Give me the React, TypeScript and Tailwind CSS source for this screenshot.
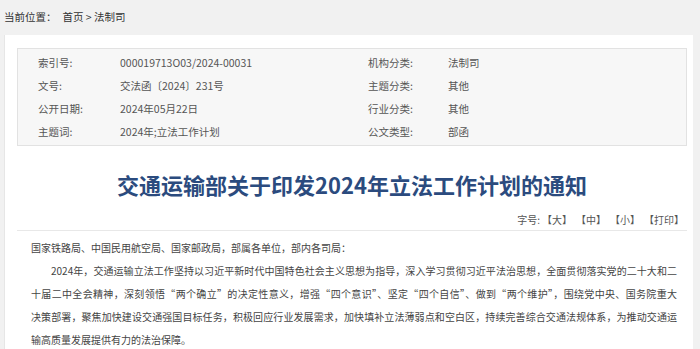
const font = "font-['Microsoft_YaHei','Noto_Sans_CJK_SC',sans-serif]";

const meta = [
  ["索引号:", "000019713O03/2024-00031", "机构分类:", "法制司"],
  ["文号:", "交法函〔2024〕231号", "主题分类:", "其他"],
  ["公开日期:", "2024年05月22日", "行业分类:", "其他"],
  ["主题词:", "2024年;立法工作计划", "公文类型:", "部函"],
];

const lines = [
  "2024年，交通运输立法工作坚持以习近平新时代中国特色社会主义思想为指导，深入学习贯彻习近平法治思想，全面贯彻落实党的二十大和二",
  "十届二中全会精神，深刻领悟“两个确立”的决定性意义，增强“四个意识”、坚定“四个自信”、做到“两个维护”，围绕党中央、国务院重大",
  "决策部署，聚焦加快建设交通强国目标任务，积极回应行业发展需求，加快填补立法薄弱点和空白区，持续完善综合交通法规体系，为推动交通运",
];

export default function App() {
  return (
    <div className={`h-[349px] w-[700px] overflow-hidden bg-[#f1f1f1] text-[10px] text-[#333] ${font}`}>
      <div className="flex h-[35px] items-center pl-[4px] pb-[2px] text-[10.5px]">
        当前位置：<span className="ml-[6px]">首页 &gt; 法制司</span>
      </div>
      <div className="ml-[4px] w-[689px] border-l border-[#e6e6e6] bg-white pl-3 pr-[6px] pt-[13px] pb-4">
        <div className="grid grid-cols-2 border border-[#e2e2e2] bg-[#f7f7f7] py-[2px] pl-5 text-[10.5px] text-[#555]">
          {meta.map((r) => (
            <>
              <div key={r[0]} className="flex h-[23px] items-center">
                <span className="w-[82px]">{r[0]}</span>
                <span>{r[1]}</span>
              </div>
              <div key={r[2]} className="flex h-[23px] items-center pl-[6px]">
                <span className="w-[80px]">{r[2]}</span>
                <span>{r[3]}</span>
              </div>
            </>
          ))}
        </div>
        <h1 className="mt-[23px] text-center text-[22px] font-bold leading-[30px] text-[#2b4b7e]">
          交通运输部关于印发2024年立法工作计划的通知
        </h1>
        <div className="mt-[13px] flex justify-end border-b border-[#e8e8e8] pb-[3px] pr-[3px] text-[#555]">
          <span>字号:</span>
          <span className="ml-[2px]">【大】</span>
          <span className="ml-[4px]">【中】</span>
          <span className="ml-[4px]">【小】</span>
          <span className="ml-[4px]">【打印】</span>
        </div>
        <div className="mt-[5px] pl-[14px] pr-[10px] leading-[23px] text-[#444]">
          <p>国家铁路局、中国民用航空局、国家邮政局，部属各单位，部内各司局：</p>
          <p className="indent-[2em]">
            {lines.map((l, i) => (
              <span key={i} className={`block text-justify [text-align-last:justify] ${i === 0 ? "" : "indent-0"}`}>
                {l}
              </span>
            ))}
            <span className="block indent-0">输高质量发展提供有力的法治保障。</span>
          </p>
        </div>
      </div>
    </div>
  );
}
